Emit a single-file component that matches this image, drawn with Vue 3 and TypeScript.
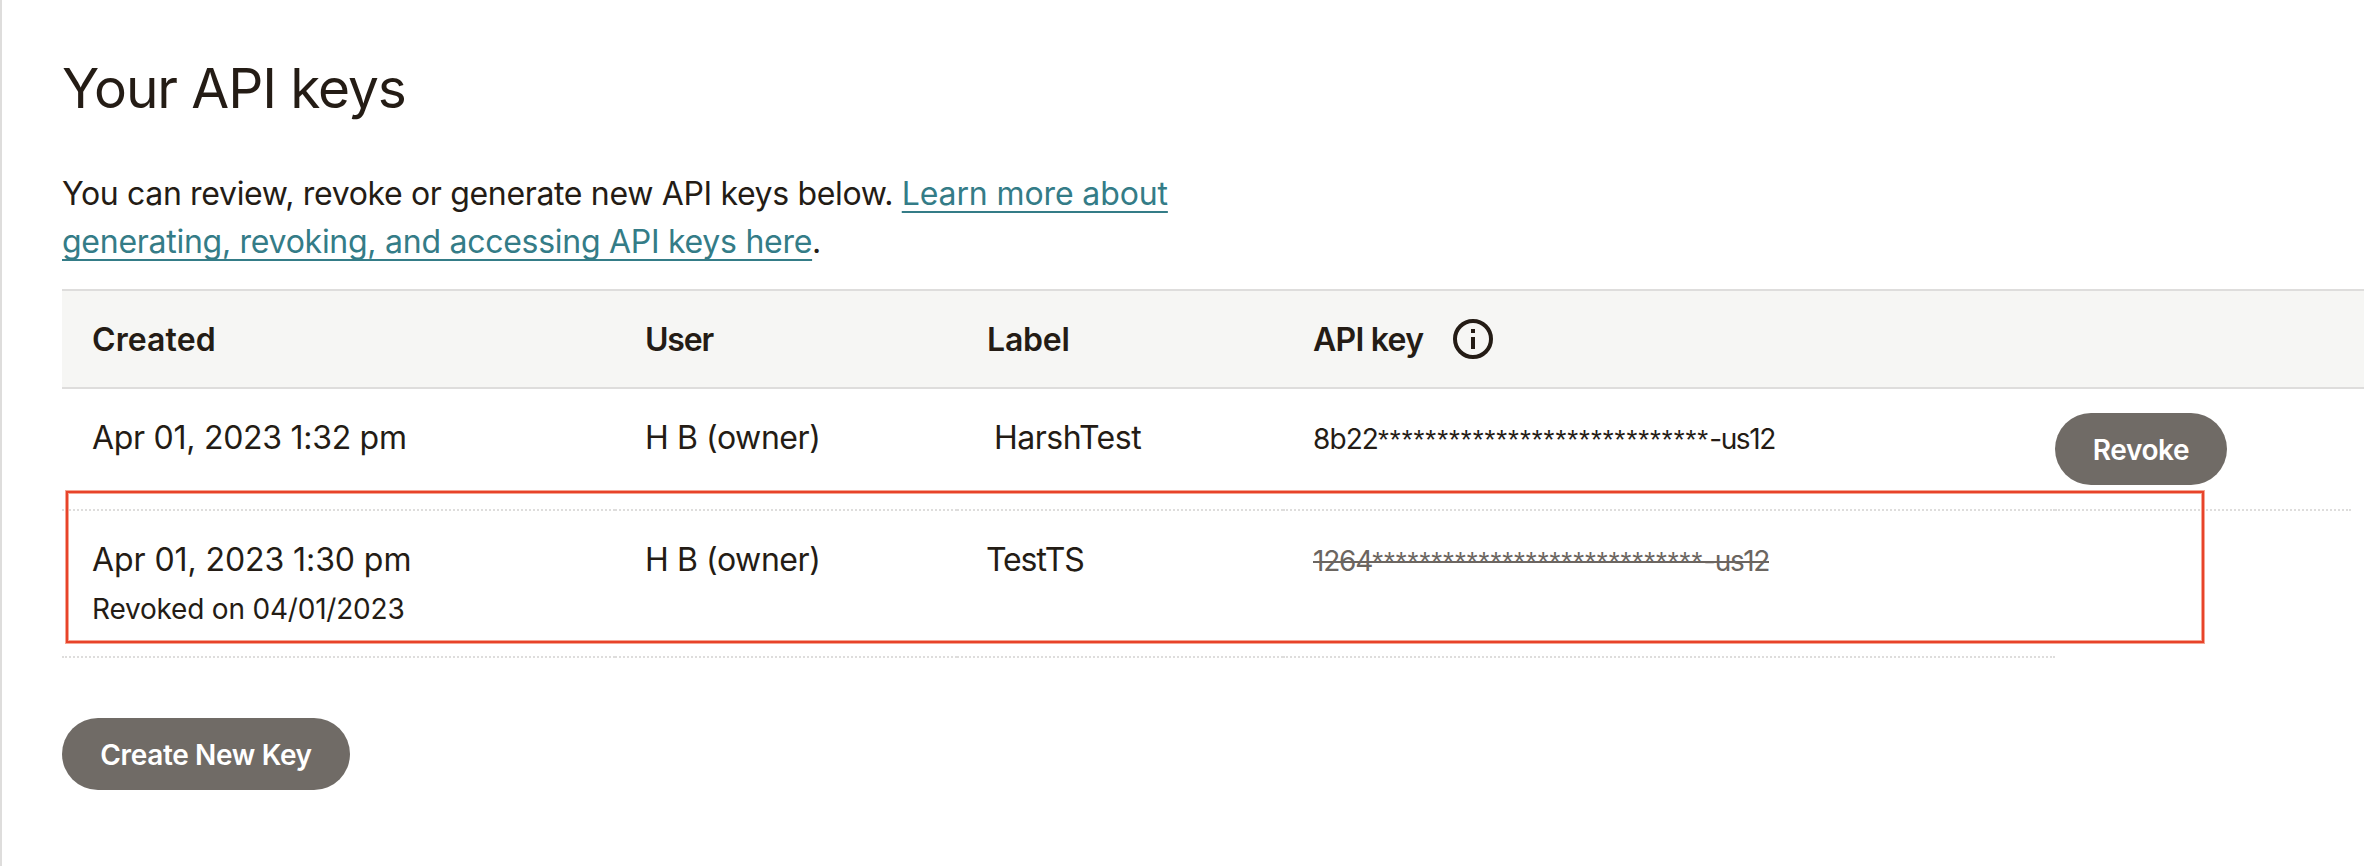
<script setup lang="ts">
interface ApiKey {
  id: number
  created: string
  revokedOn?: string
  user: string
  label: string
  prefix: string
  suffix: string
}

const mask = '*'.repeat(28)

const keys: ApiKey[] = [
  { id: 1, created: 'Apr 01, 2023 1:32 pm', user: 'H B (owner)', label: 'HarshTest', prefix: '8b22', suffix: '-us12' },
  {
    id: 2,
    created: 'Apr 01, 2023 1:30 pm',
    revokedOn: '04/01/2023',
    user: 'H B (owner)',
    label: 'TestTS',
    prefix: '1264',
    suffix: '-us12',
  },
]
</script>

<template>
  <main class="page">
    <h1 class="title">Your API keys</h1>
    <p class="intro">
      You can review, revoke or generate new API keys below.
      <a class="link" href="#"><span class="link-lead">Learn more about</span> generating, revoking, and accessing API keys here</a>.
    </p>

    <section class="table">
      <div class="row head">
        <div class="cell h-created">Created</div>
        <div class="cell h-user">User</div>
        <div class="cell h-label">Label</div>
        <div class="cell h-key">
          <span>API key</span>
          <svg class="info" viewBox="0 0 40 40" width="40" height="40" aria-hidden="true">
            <circle cx="20" cy="20" r="18" fill="none" stroke="currentColor" stroke-width="4" />
            <path d="M18 10h4v4h-4zM18 18h4v12h-4z" fill="currentColor" />
          </svg>
        </div>
      </div>

      <div v-for="k in keys" :key="k.id" class="row" :class="{ revoked: k.revokedOn }">
        <div class="cell created">
          <div>{{ k.created }}</div>
          <div v-if="k.revokedOn" class="note">Revoked on {{ k.revokedOn }}</div>
        </div>
        <div class="cell user">{{ k.user }}</div>
        <div class="cell label">{{ k.label }}</div>
        <div class="cell"><span class="key"><span class="prefix">{{ k.prefix }}</span><span class="mask">{{ mask }}</span><span class="suffix">{{ k.suffix }}</span></span></div>
        <div v-if="!k.revokedOn" class="cell action">
          <button class="btn revoke" type="button">Revoke</button>
        </div>
      </div>

      <div class="highlight"></div>
    </section>

    <button class="btn create" type="button">Create New Key</button>
  </main>
</template>

<style>
body {
  background: #fff;
  overflow: hidden;
}
</style>

<style scoped>
.page {
  box-sizing: border-box;
  height: 866px;
  padding: 56px 0 0 60px;
  border-left: 2px solid #dedddc;
  color: #241c15;
  font-family: Inter, "Liberation Sans", sans-serif;
  font-size: 32px;
  line-height: 48px;
}

.title {
  margin: 0;
  font-size: 55px;
  font-weight: 400;
  line-height: 64px;
  letter-spacing: -1.1px;
}

.intro {
  width: 1130px;
  margin: 50px 0 23px;
  letter-spacing: -0.34px;
}

.link {
  color: #347c87;
  letter-spacing: -0.27px;
  text-decoration: underline;
  text-decoration-thickness: 2px;
  text-underline-offset: 6px;
  text-decoration-skip-ink: none;
}

.link-lead {
  letter-spacing: -0.12px;
}

.table {
  position: relative;
}

.row {
  display: grid;
  grid-template-columns: 553px 342px 326px 772px 296px;
  height: 122px;
}

.row.revoked {
  height: 147px;
}

.row.head {
  height: 100px;
  box-sizing: border-box;
  align-items: center;
  border-top: 2px solid #dedddc;
  border-bottom: 2px solid #dedddc;
  background: #f6f6f4;
  font-weight: 600;
}

.cell {
  box-sizing: border-box;
  padding: 25px 0 0 30px;
  border-bottom: 2px dotted #dedddc;
}

.head .cell {
  padding-top: 2px;
  border: 0;
}

.h-created { letter-spacing: 0.1px; }
.h-user { letter-spacing: -1.2px; }
.h-label { letter-spacing: -0.2px; }

.head .h-key {
  display: flex;
  align-items: center;
  gap: 30px;
  padding-top: 0;
  letter-spacing: -0.75px;
}

.h-key span {
  padding-top: 2px;
}

.info {
  display: block;
}

.created { letter-spacing: -0.28px; }
.revoked .created { letter-spacing: -0.08px; }
.user { letter-spacing: -0.42px; }

.label {
  padding-left: 37px;
  letter-spacing: -0.5px;
}

.revoked .label {
  padding-left: 29px;
  letter-spacing: -1.1px;
}

.note {
  padding-top: 1px;
  font-size: 28px;
  letter-spacing: -0.2px;
}

.key {
  position: relative;
  font-size: 28px;
}

.revoked .key {
  color: #6b6560;
}

/* One continuous strike across the mixed-font key */
.revoked .key::after {
  content: "";
  position: absolute;
  left: 0;
  right: 0;
  top: 17px;
  height: 2px;
  background: currentColor;
}

.prefix { letter-spacing: -0.9px; }
.revoked .prefix { letter-spacing: -1.2px; }

.mask {
  font-family: "Liberation Sans", sans-serif;
  letter-spacing: 0.93px;
}

.suffix { letter-spacing: -1.4px; }

.cell.action {
  padding: 24px 0 0;
}

.btn {
  display: block;
  height: 72px;
  padding: 2px 0 0;
  border: 0;
  border-radius: 36px;
  background: #706b66;
  color: #fff;
  font: 600 28px Inter, "Liberation Sans", sans-serif;
}

.revoke {
  width: 172px;
  letter-spacing: -0.4px;
}

.create {
  width: 288px;
  margin-top: 60px;
  letter-spacing: -0.35px;
}

/* Annotation frame laid over the revoked row */
.highlight {
  position: absolute;
  left: 4px;
  top: 202px;
  box-sizing: border-box;
  width: 2138px;
  height: 152px;
  border: 2px solid #e8432a;
  box-shadow: 0 0 0 1px #f4a694, inset 0 0 0 1px #f4a694;
}
</style>
